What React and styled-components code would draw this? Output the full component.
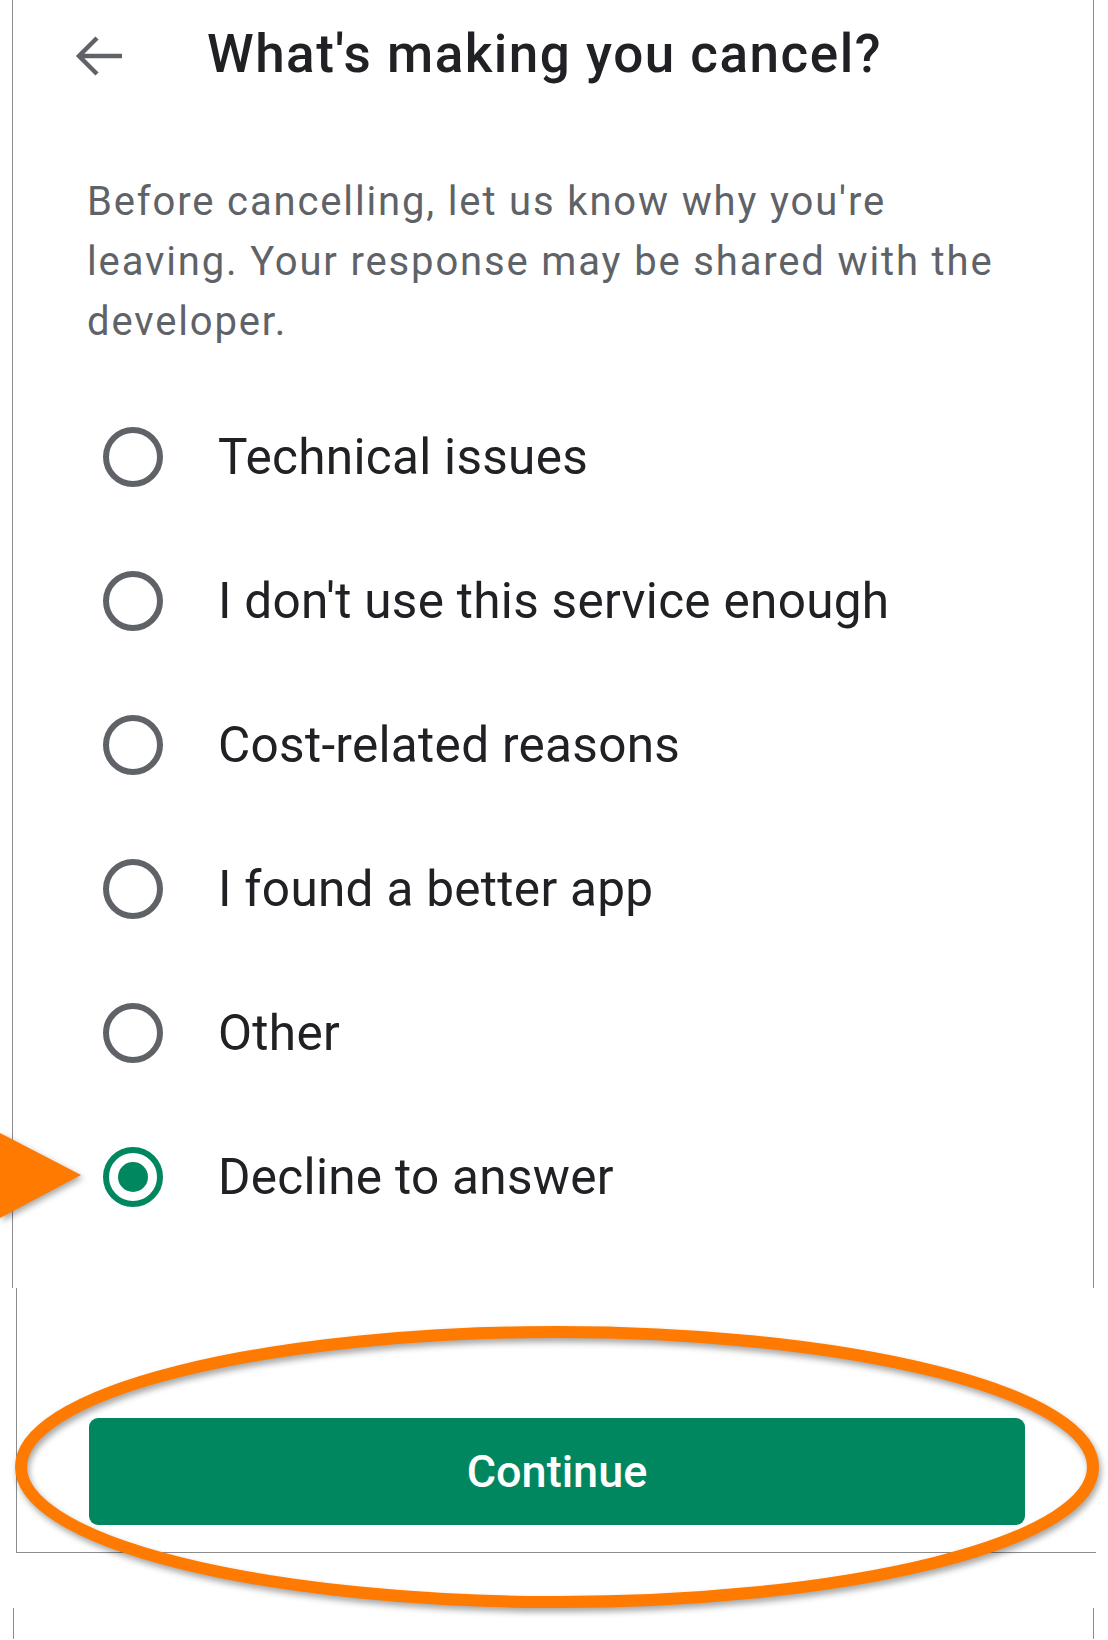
import React, { useState } from 'react'
import styled, { createGlobalStyle } from 'styled-components'

const GlobalStyle = createGlobalStyle`
  html, body {
    margin: 0;
    padding: 0;
    background: #ffffff;
  }
  body {
    font-family: Roboto, 'Noto Sans', sans-serif;
    -webkit-font-smoothing: antialiased;
  }
`

const Page = styled.div`
  position: relative;
  width: 1108px;
  height: 1640px;
  overflow: hidden;
  background: #fff;
`

const Sheet = styled.section`
  box-sizing: border-box;
  margin-left: 12px;
  width: 1082px;
  height: 1288px;
  border-left: 1px solid #8c8c8c;
  border-right: 1px solid #8c8c8c;
`

const Header = styled.header`
  display: flex;
  align-items: center;
  height: 114px;
  padding-left: 60px;
`

const BackButton = styled.button`
  display: flex;
  align-items: center;
  justify-content: center;
  width: 50px;
  height: 50px;
  padding: 0;
  border: 0;
  background: none;
  color: #5f6368;
  cursor: pointer;
`

const Title = styled.h1`
  margin: 0 0 0 84px;
  font-family: Roboto, sans-serif;
  font-weight: 500;
  font-size: 53px;
  letter-spacing: 1.5px;
  color: #202124;
  padding-bottom: 6px;
`

const Description = styled.p`
  margin: 58px 0 0 74px;
  width: 930px;
  font-size: 40px;
  line-height: 60px;
  color: #5f6368;
  letter-spacing: 1.85px;
`

const Options = styled.div`
  margin-top: 33px;
  padding-left: 90px;
`

const OptionRow = styled.label`
  display: flex;
  align-items: center;
  height: 144px;
  cursor: pointer;
`

const Radio = styled.span`
  box-sizing: border-box;
  display: flex;
  align-items: center;
  justify-content: center;
  width: 60px;
  height: 60px;
  border-radius: 50%;
  border: 6px solid ${p => (p.checked ? '#01875f' : '#5f6368')};

  &::after {
    content: '';
    display: ${p => (p.checked ? 'block' : 'none')};
    width: 30px;
    height: 30px;
    border-radius: 50%;
    background: #01875f;
  }
`

const OptionLabel = styled.span`
  margin-left: 55px;
  font-size: 49.5px;
  color: #202124;
  letter-spacing: 0.3px;
`

const Footer = styled.section`
  box-sizing: border-box;
  margin-left: 16px;
  width: 1080px;
  height: 265px;
  border-left: 1px solid #8c8c8c;
  border-bottom: 1px solid #8c8c8c;
  padding: 130px 0 0 72px;
`

const ContinueButton = styled.button`
  display: flex;
  align-items: center;
  justify-content: center;
  width: 936px;
  height: 107px;
  border: 0;
  border-radius: 9px;
  background: #01875f;
  color: #fff;
  font-family: Roboto, sans-serif;
  font-weight: 500;
  font-size: 45px;
  cursor: pointer;
`

const Tail = styled.div`
  box-sizing: border-box;
  margin: 55px 0 0 13px;
  width: 1081px;
  height: 31px;
  border-left: 1px solid #8c8c8c;
  border-right: 1px solid #8c8c8c;
`

const Pointer = styled.svg`
  position: absolute;
  left: 0;
  top: 1123px;
  filter: drop-shadow(2px 3px 3px rgba(0, 0, 0, 0.35));
`

const Highlight = styled.svg`
  position: absolute;
  left: 0;
  top: 1310px;
  filter: drop-shadow(2px 4px 3px rgba(0, 0, 0, 0.35));
  pointer-events: none;
`

const reasons = [
  'Technical issues',
  "I don't use this service enough",
  'Cost-related reasons',
  'I found a better app',
  'Other',
  'Decline to answer',
]

export default function App() {
  const [selected, setSelected] = useState(5)

  return (
    <Page>
      <GlobalStyle />
      <Sheet>
        <Header>
          <BackButton aria-label="Back">
            <svg width="50" height="50" viewBox="0 0 50 50" fill="none">
              <path d="M49 24H6M24 6L6 24l18 18" stroke="currentColor" strokeWidth="4.5" />
            </svg>
          </BackButton>
          <Title>What's making you cancel?</Title>
        </Header>
        <Description>
          Before cancelling, let us know why you're leaving. Your response may be shared with the developer.
        </Description>
        <Options>
          {reasons.map((r, i) => (
            <OptionRow key={r} onClick={() => setSelected(i)}>
              <Radio checked={selected === i} />
              <OptionLabel>{r}</OptionLabel>
            </OptionRow>
          ))}
        </Options>
      </Sheet>
      <Footer>
        <ContinueButton>Continue</ContinueButton>
      </Footer>
      <Tail />

      <Pointer width="90" height="110" viewBox="0 0 90 110">
        <polygon points="0,10 81,52 0,95" fill="#ff7a00" />
      </Pointer>
      <Highlight width="1108" height="320" viewBox="0 0 1108 320">
        <ellipse cx="557" cy="157" rx="536" ry="135" fill="none" stroke="#ff7a00" strokeWidth="12" />
      </Highlight>
    </Page>
  )
}
